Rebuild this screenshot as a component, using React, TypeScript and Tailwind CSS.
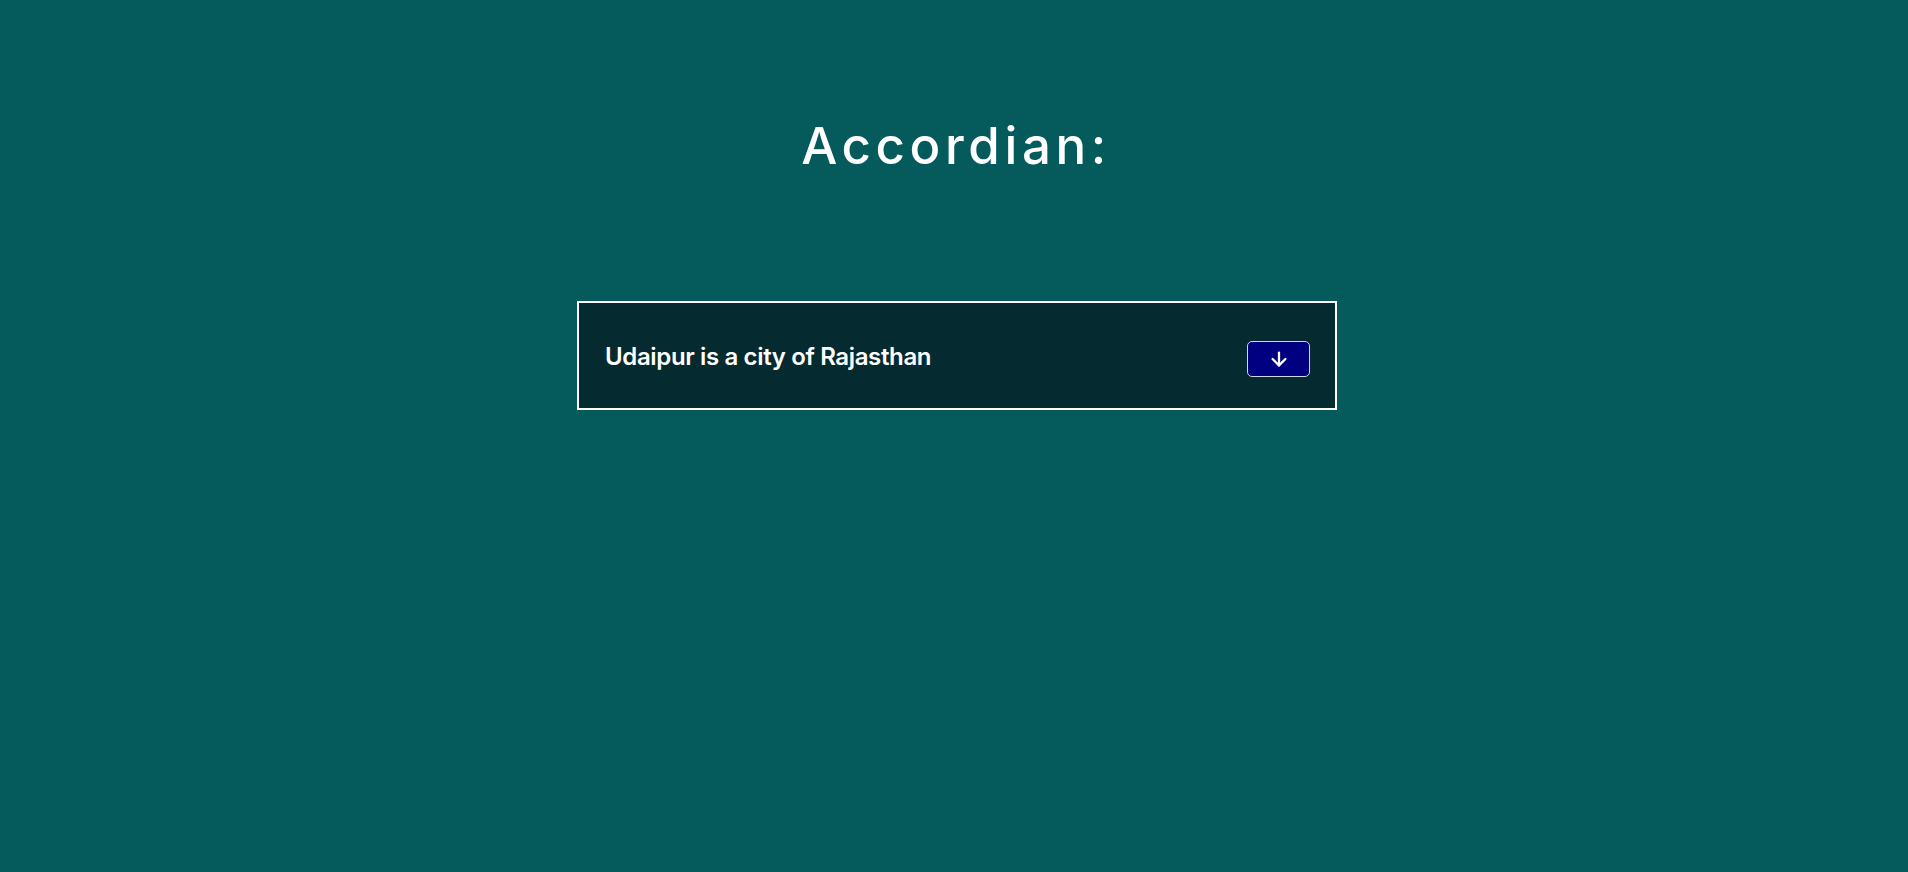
import { ArrowDown } from 'lucide-react'

const App = () => {
  return (
    <div className="min-h-[872px] w-full bg-[#055a5c] flex flex-col items-center font-['Inter',sans-serif]">
      <h1 className="mt-[106px] ml-[4px] text-[51px] leading-[80px] font-medium tracking-[0.09em] text-white">
        Accordian:
      </h1>

      <div className="mt-[115px] ml-[6px] w-[760px] h-[109px] border-2 border-white bg-[#052a2f] flex items-center justify-between pl-[26px] pr-[25px]">
        <p className="mt-[2px] text-[24px] font-semibold text-white tracking-[-0.015em]">
          Udaipur is a city of Rajasthan
        </p>
        <button className="mt-[7px] w-[63px] h-[36px] rounded-[5px] border border-gray-300 bg-[#000080] flex items-center justify-center text-white">
          <ArrowDown size={22} strokeWidth={2.5} />
        </button>
      </div>
    </div>
  )
}

export default App
